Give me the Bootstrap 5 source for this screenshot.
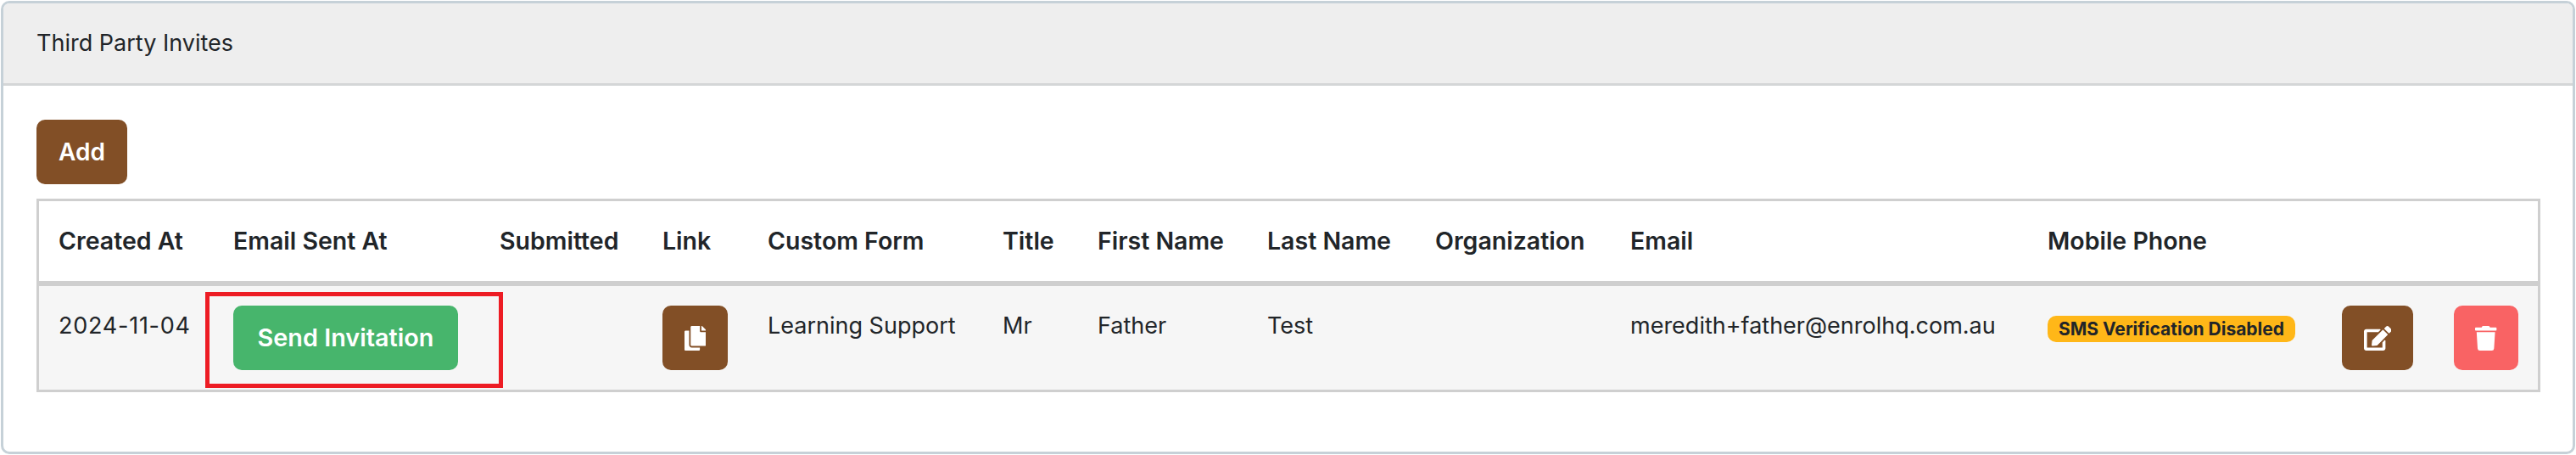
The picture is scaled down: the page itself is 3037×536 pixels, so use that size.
<!DOCTYPE html>
<html lang="en">
<head>
<meta charset="utf-8">
<title>Third Party Invites</title>
<link href="https://cdn.jsdelivr.net/npm/bootstrap@5.3.0/dist/css/bootstrap.min.css" rel="stylesheet">
<style>
html, body { background: #fff; margin: 0; height: 536px; overflow: hidden; }
body { font-family: Inter, "Liberation Sans", sans-serif; font-size: 27px; color: #212529; padding: 1px 1px 1px 1px; }
.invite-card { height: 534px; border: 3px solid #c6d1d8; border-radius: 10px; background: #fff; overflow: hidden; }
.invite-head { height: 97px; background: #eeeeee; border-bottom: 3px solid #d4d6d7; padding: 0 39px; display: flex; align-items: center; font-size: 27px; }
.invite-body { padding: 40px 39px 0; }
.act-btn { border: 0; border-radius: 10px; height: 76px; font-size: 28px; font-weight: 600; color: #fff; display: inline-flex; align-items: center; justify-content: center; padding: 0; line-height: 1; }
.act-btn:hover, .act-btn:focus { color: #fff; }
.tone-brown, .tone-brown:hover { background: #824f26; }
.tone-green, .tone-green:hover { background: #47b56c; }
.tone-red, .tone-red:hover { background: #f96364; }
.btn-add { width: 107px; margin-bottom: 17px; }
.btn-send { width: 265px; font-size: 28.8px; }
.btn-copy { width: 77px; }
.btn-edit { width: 84px; }
.btn-del { width: 76px; }
.act-btn svg { height: 29px; fill: #fff; display: block; }
.invite-table { table-layout: fixed; width: 2946px; margin: 0; border: 3px solid #cfcfcf; border-collapse: separate; border-spacing: 0; --bs-table-bg: transparent; }
.invite-table th { font-size: 28.5px; font-weight: 600; height: 100px; padding: 0 0 0 24px; vertical-align: middle; border-bottom: 6px solid #cfcfcf; white-space: nowrap; }
.invite-table td { font-size: 27px; background: #f6f6f6; height: 122px; padding: 23px 0 23px 24px; vertical-align: top; border: 0; white-space: nowrap; }
.invite-table td.txt { padding-top: 27px; }
.invite-table th:first-child { padding-left: 23px; }
.invite-table td.date-cell { padding-left: 23px; letter-spacing: .75px; }
.w1 { width: 205px; } .w2 { width: 314px; } .w3 { width: 192px; } .w4 { width: 124px; }
.w5 { width: 277px; } .w6 { width: 112px; } .w7 { width: 200px; } .w8 { width: 198px; }
.w9 { width: 230px; } .w10 { width: 492px; } .w11 { width: 347px; } .w12 { width: 132px; } .w13 { width: 123px; }
.sent-cell { position: relative; }
.red-frame { position: absolute; left: -9px; top: 7px; width: 351px; height: 113px; border: 5px solid #ed1c24; pointer-events: none; }
.sms-pill { display: inline-block; background: #ffb718; color: #212529; font-size: 21px; font-weight: 700; line-height: 31px; height: 31px; width: 292px; text-align: center; border-radius: 10px; padding: 0; vertical-align: top; }
.invite-table td.badge-cell { padding-top: 35px; }
</style>
</head>
<body>
<div class="invite-card">
  <div class="invite-head">Third Party Invites</div>
  <div class="invite-body">
    <button type="button" class="btn act-btn tone-brown btn-add d-flex">Add</button>
    <table class="table invite-table">
      <colgroup>
        <col class="w1"><col class="w2"><col class="w3"><col class="w4"><col class="w5"><col class="w6"><col class="w7"><col class="w8"><col class="w9"><col class="w10"><col class="w11"><col class="w12"><col class="w13">
      </colgroup>
      <thead>
        <tr>
          <th>Created At</th><th>Email Sent At</th><th>Submitted</th><th>Link</th><th>Custom Form</th><th>Title</th><th>First Name</th><th>Last Name</th><th>Organization</th><th>Email</th><th>Mobile Phone</th><th></th><th></th>
        </tr>
      </thead>
      <tbody>
        <tr>
          <td class="txt date-cell">2024-11-04</td>
          <td class="sent-cell"><button type="button" class="btn act-btn tone-green btn-send">Send Invitation</button><span class="red-frame"></span></td>
          <td></td>
          <td><button type="button" class="btn act-btn tone-brown btn-copy" aria-label="Copy link"><svg viewBox="0 0 448 512"><path d="M320 448v40c0 13.255-10.745 24-24 24H24c-13.255 0-24-10.745-24-24V120c0-13.255 10.745-24 24-24h72v296c0 30.879 25.121 56 56 56h168zm0-344V0H152c-13.255 0-24 10.745-24 24v368c0 13.255 10.745 24 24 24h272c13.255 0 24-10.745 24-24V128H344c-13.2 0-24-10.8-24-24zm120.971-31.029L375.029 7.029A24 24 0 0 0 358.059 0H352v96h96v-6.059a24 24 0 0 0-7.029-16.97z"/></svg></button></td>
          <td class="txt">Learning Support</td>
          <td class="txt">Mr</td>
          <td class="txt">Father</td>
          <td class="txt">Test</td>
          <td></td>
          <td class="txt">meredith+father@enrolhq.com.au</td>
          <td class="badge-cell"><span class="sms-pill">SMS Verification Disabled</span></td>
          <td><button type="button" class="btn act-btn tone-brown btn-edit" aria-label="Edit"><svg viewBox="0 0 576 512"><path d="M402.6 83.2l90.2 90.2c3.8 3.8 3.8 10 0 13.8L274.4 405.6l-92.8 10.3c-12.4 1.4-22.9-9.1-21.5-21.5l10.3-92.8L388.8 83.2c3.8-3.8 10-3.8 13.8 0zm162-22.9l-48.8-48.8c-15.2-15.2-39.9-15.2-55.2 0l-35.4 35.4c-3.8 3.8-3.8 10 0 13.8l90.2 90.2c3.8 3.8 10 3.8 13.8 0l35.4-35.4c15.2-15.3 15.2-40 0-55.2zM384 346.2V448H64V128h229.8c3.2 0 6.2-1.3 8.5-3.5l40-40c7.6-7.6 2.2-20.5-8.5-20.5H48C21.5 64 0 85.5 0 112v352c0 26.5 21.5 48 48 48h352c26.5 0 48-21.5 48-48V306.2c0-10.7-12.9-16-20.5-8.5l-40 40c-2.2 2.3-3.5 5.3-3.5 8.5z"/></svg></button></td>
          <td><button type="button" class="btn act-btn tone-red btn-del" aria-label="Delete"><svg viewBox="0 0 448 512"><path d="M432 32H312l-9.4-18.7A24 24 0 0 0 281.1 0H166.8a23.72 23.72 0 0 0-21.4 13.3L136 32H16A16 16 0 0 0 0 48v32a16 16 0 0 0 16 16h416a16 16 0 0 0 16-16V48a16 16 0 0 0-16-16zM53.2 467a48 48 0 0 0 47.9 45h245.8a48 48 0 0 0 47.9-45L416 128H32z"/></svg></button></td>
        </tr>
      </tbody>
    </table>
  </div>
</div>
<script src="https://cdn.jsdelivr.net/npm/bootstrap@5.3.0/dist/js/bootstrap.bundle.min.js"></script>
</body>
</html>
